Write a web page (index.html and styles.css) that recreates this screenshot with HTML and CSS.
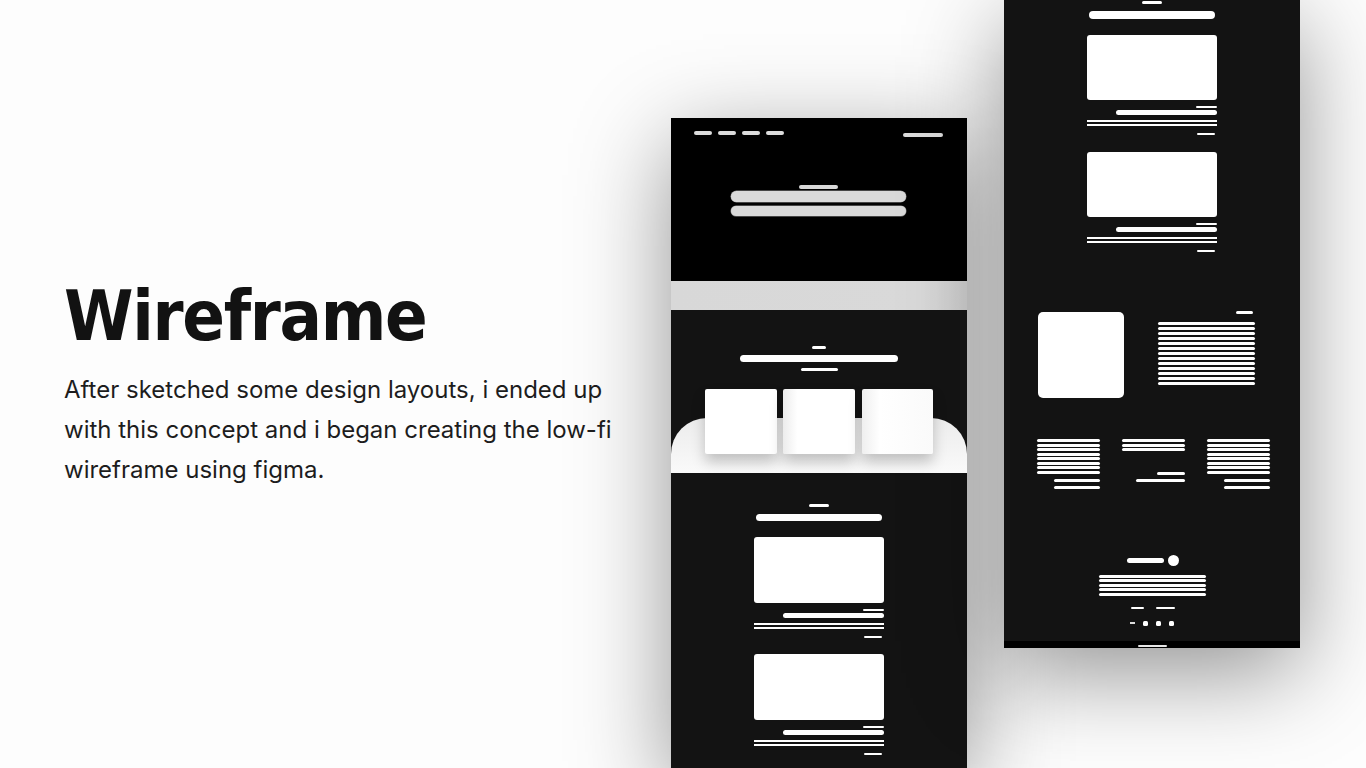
FILE: index.html
```html
<!DOCTYPE html>
<html lang="en">
<head>
<meta charset="utf-8">
<title>Wireframe</title>
<link rel="stylesheet" href="styles.css">
</head>
<body>
<main class="slide">
  <section class="intro">
    <h1 class="title">Wireframe</h1>
    <p class="lead">After sketched some design layouts, i ended up with this concept and i began creating the low-fi wireframe using figma.</p>
  </section>

  <section class="stage">
    <!-- left mockup -->
    <div class="phone phone-left">
      <header class="wf-header">
        <nav class="wf-nav">
          <div class="wf-links">
            <span class="nav-pill"></span><span class="nav-pill"></span><span class="nav-pill"></span><span class="nav-pill"></span>
          </div>
          <span class="nav-cta"></span>
        </nav>
        <div class="wf-hero">
          <span class="hero-kicker"></span>
          <span class="hero-bar"></span>
          <span class="hero-bar hero-bar-2"></span>
        </div>
      </header>
      <div class="wf-band"></div>
      <section class="wf-services">
        <span class="sv-kicker"></span>
        <span class="sv-title"></span>
        <span class="sv-sub"></span>
        <div class="sv-cards">
          <div class="sv-card"></div>
          <div class="sv-card sv-card-mid"></div>
          <div class="sv-card sv-card-end"></div>
        </div>
      </section>
      <section class="wf-blog">
        <span class="blog-kicker"></span>
        <span class="blog-title"></span>
        <article class="post">
          <div class="post-img"></div>
          <span class="post-tag"></span>
          <span class="post-head"></span>
          <span class="post-line"></span>
          <span class="post-line post-line-2"></span>
          <span class="post-more"></span>
        </article>
        <article class="post post-next">
          <div class="post-img"></div>
          <span class="post-tag"></span>
          <span class="post-head"></span>
          <span class="post-line"></span>
          <span class="post-line post-line-2"></span>
          <span class="post-more"></span>
        </article>
      </section>
    </div>

    <!-- right mockup -->
    <div class="phone phone-right">
      <section class="wf-blog wf-blog-top">
        <span class="blog-kicker"></span>
        <span class="blog-title blog-title-r"></span>
        <article class="post post-r">
          <div class="post-img post-img-r"></div>
          <span class="post-tag"></span>
          <span class="post-head"></span>
          <span class="post-line"></span>
          <span class="post-line post-line-2"></span>
          <span class="post-more"></span>
        </article>
        <article class="post post-next post-r">
          <div class="post-img post-img-r"></div>
          <span class="post-tag"></span>
          <span class="post-head"></span>
          <span class="post-line"></span>
          <span class="post-line post-line-2"></span>
          <span class="post-more"></span>
        </article>
      </section>

      <section class="wf-about">
        <div class="about-img"></div>
        <div class="about-text">
          <span class="about-kicker"></span>
          <div class="lines lines-about">
            <i></i><i></i><i></i><i></i><i></i><i></i><i></i><i></i><i></i><i></i><i></i><i></i><i></i>
          </div>
        </div>
      </section>

      <section class="wf-cols">
        <div class="col">
          <div class="lines lines-col"><i></i><i></i><i></i><i></i><i></i><i></i><i></i><i></i></div>
          <div class="col-foot"><i></i><i></i></div>
        </div>
        <div class="col col-mid">
          <div class="lines lines-col"><i></i><i></i><i></i></div>
          <div class="col-foot col-foot-mid"><i class="mid-a"></i><i class="mid-b"></i></div>
        </div>
        <div class="col">
          <div class="lines lines-col"><i></i><i></i><i></i><i></i><i></i><i></i><i></i><i></i></div>
          <div class="col-foot"><i></i><i></i></div>
        </div>
      </section>

      <footer class="wf-footer">
        <div class="ft-brand"><span class="ft-name"></span><span class="ft-dot"></span></div>
        <div class="lines lines-footer"><i></i><i></i><i></i><i></i><i></i></div>
        <div class="ft-links"><span class="ft-l1"></span><span class="ft-l2"></span></div>
        <div class="ft-social"><span class="ft-arrow"></span><span class="ft-s"></span><span class="ft-s"></span><span class="ft-s"></span></div>
      </footer>
      <div class="wf-homebar"><span></span></div>
    </div>
  </section>
</main>
</body>
</html>
```

FILE: styles.css
```css
* { box-sizing: border-box; margin: 0; padding: 0; }

html, body {
  width: 1366px;
  height: 768px;
  overflow: hidden;
  background: #fdfdfd;
}

.slide {
  display: flex;
  width: 1366px;
  height: 768px;
  overflow: hidden;
}

/* ---------- intro text ---------- */
.intro {
  width: 671px;
  flex-shrink: 0;
  padding: 281px 0 0 64px;
}

.title {
  font-family: "DejaVu Sans Condensed", "DejaVu Sans", sans-serif;
  font-weight: 700;
  font-size: 70px;
  line-height: 70px;
  color: #121212;
  letter-spacing: -1.3px;
}

.lead {
  margin-top: 19px;
  width: 575px;
  font-family: Inter, "Noto Sans", sans-serif;
  font-size: 24px;
  line-height: 40px;
  color: #1d1d1d;
}

/* ---------- stage ---------- */
.stage {
  display: flex;
  align-items: flex-start;
  gap: 37px;
}

.phone {
  width: 296px;
  flex-shrink: 0;
  background: #131313;
  box-shadow: 0 25px 90px rgba(0, 0, 0, 0.42);
  display: flex;
  flex-direction: column;
}

.phone span, .phone i { display: block; }

.phone-left {
  margin-top: 118px;
  height: 650px;
}

.phone-right {
  height: 648px;
}

/* header */
.wf-header {
  height: 163px;
  background: #000;
  padding: 13px 24px 0 23px;
}

.wf-nav {
  display: flex;
  justify-content: space-between;
  align-items: flex-start;
}

.wf-links { display: flex; gap: 6px; }

.nav-pill {
  width: 18px;
  height: 4px;
  border-radius: 2px;
  background: #dcdcdc;
}

.nav-cta {
  width: 40px;
  height: 4px;
  margin-top: 2px;
  border-radius: 2px;
  background: #dcdcdc;
}

.wf-hero {
  margin-top: 48px;
  display: flex;
  flex-direction: column;
  align-items: center;
  padding-right: 1px;
}

.hero-kicker {
  width: 39px;
  height: 4px;
  border-radius: 2px;
  background: #d9d9d9;
}

.hero-bar {
  margin-top: 2px;
  width: 175px;
  height: 11px;
  border-radius: 6px;
  background: #d9d9d9;
  box-shadow: 0 0 0 0.5px #8a8a8a;
}

.hero-bar-2 { margin-top: 4px; height: 10px; }

.wf-band {
  height: 29px;
  background: linear-gradient(90deg, #d8d8d8 0%, #d9d9d9 85%, #cfcfcf 100%);
}

/* services */
.wf-services {
  position: relative;
  height: 163px;
  background: #131313;
  padding-top: 36px;
  display: flex;
  flex-direction: column;
  align-items: center;
}

.wf-services::before {
  content: "";
  position: absolute;
  left: 0;
  right: 0;
  bottom: 0;
  height: 55px;
  border-radius: 36px 36px 0 0;
  background: linear-gradient(180deg, #ececec 0%, #f4f4f4 60%, #fafafa 100%);
}

.sv-kicker { width: 14px; height: 3px; border-radius: 2px; background: #fff; }
.sv-title { margin-top: 6px; width: 158px; height: 7px; border-radius: 4px; background: #fff; }
.sv-sub { margin-top: 6px; width: 37px; height: 3px; border-radius: 2px; background: #fff; }

.sv-cards {
  position: relative;
  z-index: 1;
  margin-top: 18px;
  display: flex;
  gap: 6px;
}

.sv-card {
  width: 72px;
  height: 65px;
  border-radius: 2px;
  background: #fff;
  box-shadow: 0 8px 14px rgba(0, 0, 0, 0.22);
}

.sv-card-mid {
  background: linear-gradient(90deg, #ececec 0%, #fff 20%, #fff 100%);
}

.sv-card-end {
  margin-left: 1px;
  width: 71px;
  background: linear-gradient(90deg, #efefef 0%, #fff 25%, #fafafa 100%);
}

/* blog */
.wf-blog {
  padding-top: 31px;
  display: flex;
  flex-direction: column;
  align-items: center;
}

.wf-blog-top { padding-top: 1px; }

.blog-kicker { width: 20px; height: 3px; border-radius: 2px; background: #fff; }
.blog-title { margin-top: 7px; width: 126px; height: 7px; border-radius: 4px; background: #fff; }
.blog-title-r { height: 8px; }

.post {
  margin-top: 16px;
  width: 130px;
  display: flex;
  flex-direction: column;
  align-items: flex-end;
}

.post-next { margin-top: 16px; }
.post-r.post-next { margin-top: 17px; }

.post-img {
  width: 130px;
  height: 66px;
  border-radius: 3px;
  background: #fff;
}

.post-img-r { height: 65px; }

.post-tag { margin-top: 6px; width: 21px; height: 2px; border-radius: 1px; background: #fff; }
.post-head { margin-top: 2px; width: 101px; height: 5px; border-radius: 3px; background: #fff; }
.post-line { margin-top: 5px; width: 130px; height: 2px; background: #fff; }
.post-line-2 { margin-top: 2px; }
.post-more { margin-top: 7px; margin-right: 2px; width: 18px; height: 2px; border-radius: 1px; background: #fff; }

/* about */
.wf-about {
  margin-top: 59px;
  display: flex;
  padding: 0 45px 0 34px;
  justify-content: space-between;
  align-items: flex-start;
}

.about-img {
  width: 86px;
  height: 86px;
  border-radius: 5px;
  background: #fff;
  margin-top: 1px;
}

.about-text {
  width: 97px;
  display: flex;
  flex-direction: column;
  align-items: flex-end;
}

.about-kicker { margin-right: 2px; width: 17px; height: 3px; border-radius: 2px; background: #fff; }

.lines { display: flex; flex-direction: column; }
.lines i { height: 3px; border-radius: 1.5px; background: #fff; }

.lines-about { margin-top: 8px; width: 97px; gap: 2px; }

/* columns */
.wf-cols {
  margin-top: 41px;
  padding-left: 33px;
  display: flex;
  gap: 22px;
}

.col { width: 63px; display: flex; flex-direction: column; align-items: flex-end; }
.col-mid { width: 63px; margin-left: 0; }
.lines-col { width: 63px; gap: 1.5px; }

.col-foot { margin-top: 5px; display: flex; flex-direction: column; gap: 4px; }
.col-foot i { width: 46px; height: 3px; border-radius: 1.5px; background: #fff; }

.col-foot-mid { margin-top: 21px; align-items: flex-end; }
.col-foot-mid .mid-a { width: 28px; }
.col-foot-mid .mid-b { width: 49px; }

/* footer */
.wf-footer {
  margin-top: 66px;
  display: flex;
  flex-direction: column;
  align-items: center;
}

.ft-brand { display: flex; align-items: center; gap: 4px; padding-left: 1px; }
.ft-name { width: 37px; height: 5px; border-radius: 3px; background: #fff; }
.ft-dot { width: 11px; height: 11px; border-radius: 50%; background: #fff; }

.lines-footer { margin-top: 9px; width: 107px; gap: 1.6px; }

.ft-links { margin-top: 11px; display: flex; gap: 12px; padding-left: 1px; }
.ft-l1 { width: 13px; height: 2px; border-radius: 1px; background: #fff; }
.ft-l2 { width: 19px; height: 2px; border-radius: 1px; background: #fff; }

.ft-social { margin-top: 12px; display: flex; align-items: center; gap: 8px; }
.ft-arrow { width: 5px; height: 2px; background: #ddd; margin-right: 0; }
.ft-s { width: 5px; height: 5px; border-radius: 1.5px; background: #fff; }

.wf-homebar {
  margin-top: auto;
  height: 7px;
  background: #000;
  display: flex;
  justify-content: center;
  align-items: flex-end;
  padding-bottom: 1px;
}

.wf-homebar span {
  width: 29px;
  height: 2px;
  background: #e6e6e6;
  border-radius: 1px;
}
```
